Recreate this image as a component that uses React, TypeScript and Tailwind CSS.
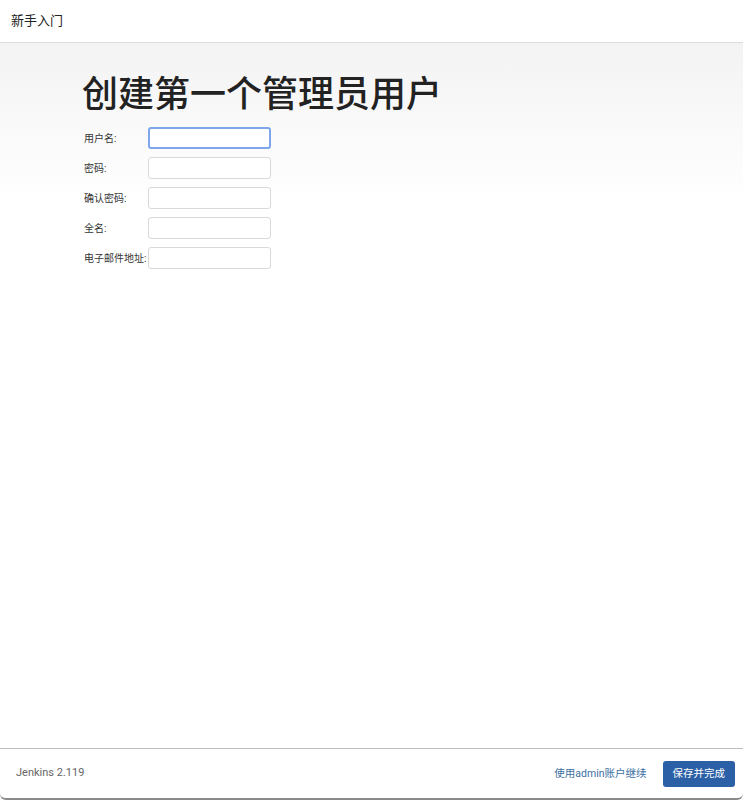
export default function App() {
  const fields = [
    { label: '用户名:', type: 'text', focus: true },
    { label: '密码:', type: 'password' },
    { label: '确认密码:', type: 'password' },
    { label: '全名:', type: 'text' },
    { label: '电子邮件地址:', type: 'text' },
  ];

  return (
    <div
      className="flex h-[800px] w-[743px] flex-col overflow-hidden rounded-b-[6px] border-b-2 border-[#8a8a8a] bg-white text-[#333]"
      style={{ fontFamily: '"Roboto", "Noto Sans CJK SC", sans-serif' }}
    >
      <header className="flex h-[43px] shrink-0 items-center border-b border-[#dcdcdc] px-[11px]">
        <h4 className="text-[13px] text-[#222]">新手入门</h4>
      </header>

      <main className="flex-1 bg-gradient-to-b from-[#f3f3f3] to-white to-[160px] pl-[82px] pt-[28px]">
        <h1 className="text-[36px] font-medium leading-[48px] text-[#222]">创建第一个管理员用户</h1>
        <form className="mt-[8px] flex flex-col gap-[8px] pl-[2px]">
          {fields.map((f) => (
            <div key={f.label} className="flex items-center">
              <label className="w-[64px] shrink-0 text-[10px] text-[#333]">{f.label}</label>
              <input
                type={f.type}
                className={
                  f.focus
                    ? 'h-[22px] w-[123px] rounded-[3px] border-2 border-[#7ea6ec] bg-white outline-none'
                    : 'h-[22px] w-[123px] rounded-[3px] border border-[#d9d9d9] bg-white outline-none'
                }
              />
            </div>
          ))}
        </form>
      </main>

      <footer className="flex h-[50px] shrink-0 items-center border-t border-[#bdbdbd] pl-[16px] pr-[8px]">
        <span className="text-[11px] text-[#666]">Jenkins 2.119</span>
        <div className="ml-auto flex items-center gap-[16px]">
          <a className="text-[10.5px] text-[#3d6fa3]">使用admin账户继续</a>
          <button className="h-[26px] rounded-[3px] bg-[#2b5fa6] px-[10px] text-[10.5px] text-white">保存并完成</button>
        </div>
      </footer>
    </div>
  );
}
